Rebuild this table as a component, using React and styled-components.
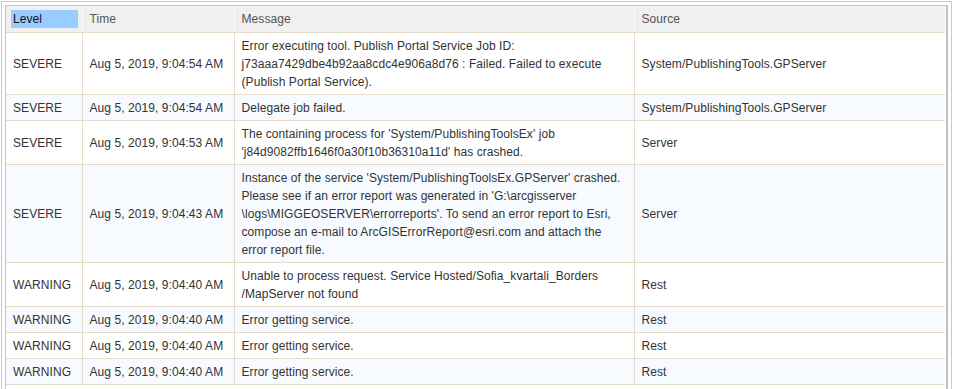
import React from "react";
import styled, { createGlobalStyle } from "styled-components";

const GlobalStyle = createGlobalStyle`
  html, body {
    margin: 0;
    padding: 0;
    background: #fff;
  }
  body {
    font-family: "Liberation Sans", Arial, sans-serif;
  }
`;

const Frame = styled.div`
  margin: 1px 0 0 1px;
  width: 951px;
  height: 420px;
  box-sizing: border-box;
  border: 1px solid #c9c9c9;
  padding: 3px;
`;

const Panel = styled.div`
  height: 100%;
  box-sizing: border-box;
  border: 1px solid #c4c4c4;
  border-right: 2px solid #c0c0c0;
  border-bottom: none;
  overflow: hidden;
`;

const Table = styled.table`
  width: 939px;
  border-collapse: collapse;
  table-layout: fixed;
  font-size: 12px;
  line-height: 18px;
  letter-spacing: 0.07px;
`;

const HeadCell = styled.th`
  background: #f0f0f0;
  padding: 4px 4px 4px 5px;
  text-align: left;
  font-weight: normal;
  color: #555;
  border-bottom: 1px solid #e6dac8;
  border-left: 1px solid #fbfbfb;
  &:first-child {
    border-left: none;
  }
`;

const HeadLabel = styled.span`
  display: block;
  padding: 0 2px;
  background: ${(p) => (p.$active ? "#99ccff" : "transparent")};
  color: ${(p) => (p.$active ? "#111" : "#555")};
`;

const Row = styled.tr`
  background: ${(p) => (p.$alt ? "#f7fbff" : "#fff")};
`;

const Cell = styled.td`
  padding: 4px 7px 3px 7px;
  color: #333;
  vertical-align: middle;
  border-bottom: 1px solid #e6dac8;
  border-left: 1px solid #e6dac8;
  &:first-child {
    border-left: none;
  }
`;

const columns = [
  { key: "level", label: "Level", width: 76 },
  { key: "time", label: "Time", width: 152 },
  { key: "message", label: "Message", width: 400 },
  { key: "source", label: "Source", width: 311 },
];

const rows = [
  {
    level: "SEVERE",
    time: "Aug 5, 2019, 9:04:54 AM",
    message:
      "Error executing tool. Publish Portal Service Job ID: j73aaa7429dbe4b92aa8cdc4e906a8d76 : Failed. Failed to execute (Publish Portal Service).",
    source: "System/PublishingTools.GPServer",
  },
  {
    level: "SEVERE",
    time: "Aug 5, 2019, 9:04:54 AM",
    message: "Delegate job failed.",
    source: "System/PublishingTools.GPServer",
  },
  {
    level: "SEVERE",
    time: "Aug 5, 2019, 9:04:53 AM",
    message:
      "The containing process for 'System/PublishingToolsEx' job 'j84d9082ffb1646f0a30f10b36310a11d' has crashed.",
    source: "Server",
  },
  {
    level: "SEVERE",
    time: "Aug 5, 2019, 9:04:43 AM",
    message:
      "Instance of the service 'System/PublishingToolsEx.GPServer' crashed. Please see if an error report was generated in 'G:\\arcgisserver\u200B\\logs\\MIGGEOSERVER\\errorreports'. To send an error report to Esri, compose an e-mail to ArcGISErrorReport@esri.com and attach the error report file.",
    source: "Server",
  },
  {
    level: "WARNING",
    time: "Aug 5, 2019, 9:04:40 AM",
    message:
      "Unable to process request. Service Hosted/Sofia_kvartali_Borders\u200B/MapServer not found",
    source: "Rest",
  },
  {
    level: "WARNING",
    time: "Aug 5, 2019, 9:04:40 AM",
    message: "Error getting service.",
    source: "Rest",
  },
  {
    level: "WARNING",
    time: "Aug 5, 2019, 9:04:40 AM",
    message: "Error getting service.",
    source: "Rest",
  },
  {
    level: "WARNING",
    time: "Aug 5, 2019, 9:04:40 AM",
    message: "Error getting service.",
    source: "Rest",
  },
];

export default function App() {
  return (
    <>
      <GlobalStyle />
      <Frame>
        <Panel>
          <Table>
            <colgroup>
              {columns.map((c) => (
                <col key={c.key} style={{ width: c.width }} />
              ))}
            </colgroup>
            <thead>
              <tr>
                {columns.map((c) => (
                  <HeadCell key={c.key}>
                    <HeadLabel $active={c.key === "level"}>{c.label}</HeadLabel>
                  </HeadCell>
                ))}
              </tr>
            </thead>
            <tbody>
              {rows.map((r, i) => (
                <Row key={i} $alt={i % 2 === 1}>
                  <Cell>{r.level}</Cell>
                  <Cell>{r.time}</Cell>
                  <Cell>{r.message}</Cell>
                  <Cell>{r.source}</Cell>
                </Row>
              ))}
            </tbody>
          </Table>
        </Panel>
      </Frame>
    </>
  );
}
